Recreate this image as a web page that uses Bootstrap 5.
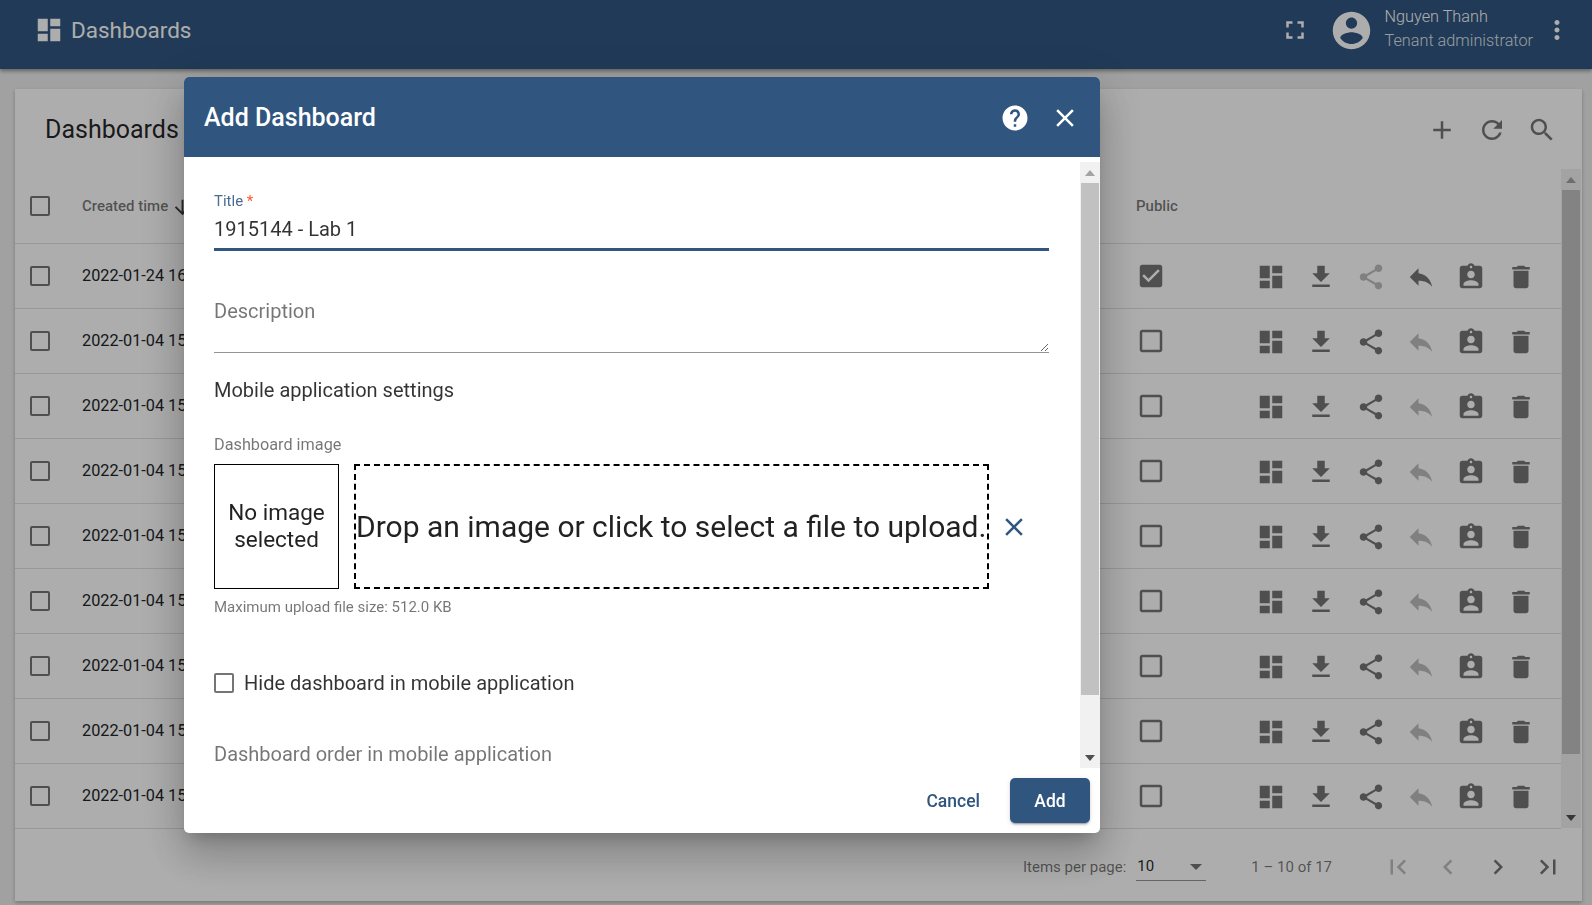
<!DOCTYPE html>
<html lang="en">
<head>
    <meta charset="UTF-8">
    <meta name="viewport" content="width=device-width, initial-scale=1.0">
    <title>Dashboards</title>
    <link href="https://cdn.jsdelivr.net/npm/bootstrap@5.3.0/dist/css/bootstrap.min.css" rel="stylesheet">
    <style>
        html, body { height: 100%; overflow: hidden; }
        body { font-family: Roboto, "Liberation Sans", sans-serif; background: #eee; color: rgba(0,0,0,.87); }
        svg.ic { width: 30px; height: 30px; fill: currentColor; flex: none; display: block; }
        svg.ic-avatar { width: 45px; height: 45px; margin-left: 19px; }
        svg.ic-sort { width: 23px; height: 23px; margin: 3px 0 0 3px; color: rgba(0,0,0,.75); }
        .tb-top { height: 69px; background: #305680; color: #fff; padding: 0 20px 9px 34px; box-shadow: 0 2px 4px rgba(0,0,0,.4); position: relative; }
        .tb-title { font-size: 22.5px; font-weight: 400; margin-left: 7px; line-height: 30px; }
        .user-box { margin: 0 9px 3px 11px; }
        .user-name { font-size: 16.25px; font-weight: 300; line-height: 24px; }
        .user-role { font-size: 16.25px; font-weight: 300; line-height: 24px; opacity: .85; }
        .page-main { padding: 20px 10px 0 15px; }
        .list-card { height: 812px; border-radius: 0; border: 0; box-shadow: 0 2px 4px rgba(0,0,0,.25); }
        .card-tools { height: 80px; padding: 2px 15px 0 30px; }
        .card-heading { font-size: 25px; font-weight: 400; line-height: 32px; margin: 0; }
        .tool-btn { width: 50px; height: 50px; color: rgba(0,0,0,.54); }
        .tool-btn.off { color: rgba(0,0,0,.26); }
        .list-wrap { height: 661px; overflow: hidden; }
        .list-wrap .table-box { flex: 1; min-width: 0; }
        .dash-table { table-layout: fixed; margin: 0; font-size: 16.25px; --bs-table-bg: transparent; --bs-table-border-color: rgba(0,0,0,.12); }
        .dash-table th, .dash-table td { padding: 0; vertical-align: middle; height: 65px; }
        .dash-table thead th { height: 74px; font-size: 15px; font-weight: 500; color: rgba(0,0,0,.54); }
        .dash-table td.time-cell { padding-top: 1px; }
        .dash-table td.act-cell { padding-top: 2px; }
        .check-cell { padding-left: 15px !important; }
        .box-check { display: block; width: 20px; height: 20px; border: 2px solid rgba(0,0,0,.54); border-radius: 2px; }
        .fake-sb { width: 20px; background: #f1f1f1; }
        .sb-up, .sb-down { height: 21px; }
        .sb-up::before, .sb-down::before { content: ""; border-left: 5px solid transparent; border-right: 5px solid transparent; }
        .sb-up::before { border-bottom: 6px solid #a3a3a3; }
        .sb-down::before { border-top: 6px solid #505050; }
        .sb-thumb { background: #c1c1c1; margin: 0 1px; }
        .sb-rest { flex: 1; }
        .list-sb { height: 659px; margin-right: 1px; }
        .list-sb .sb-thumb { height: 564px; }
        .pager { height: 71px; padding: 3px 9px 0 0; font-size: 15px; font-weight: 400; color: rgba(0,0,0,.54); }
        .pager-select { width: 70px; height: 27px; margin: 0 45px 0 10px; color: rgba(0,0,0,.87); border-bottom: 1px solid rgba(0,0,0,.42); padding: 0 0 0 1px; }
        .pager-select::after { content: ""; border-left: 6px solid transparent; border-right: 6px solid transparent; border-top: 6px solid rgba(0,0,0,.54); margin-right: 4px; }
        .pager-range { margin-right: 41px; }
        .modal-backdrop.show { opacity: .32; }
        .add-dialog { max-width: 916px; width: 916px; margin: 77px 0 0 184px; }
        .add-content { border: 0; border-radius: 5px; overflow: hidden; height: 756px; box-shadow: 0 11px 15px -7px rgba(0,0,0,.2), 0 24px 38px 3px rgba(0,0,0,.14), 0 9px 46px 8px rgba(0,0,0,.12); }
        .add-head { height: 80px; flex: none; background: #305680; color: #fff; padding: 2px 10px 0 20px; border: 0; border-radius: 0; }
        .add-head h2 { font-size: 25px; font-weight: 500; margin: 0; line-height: 30px; }
        .head-btn { width: 50px; height: 50px; }
        .add-body { padding: 0; height: 611px; flex: none; overflow: hidden; }
        .form-side { flex: 1; min-width: 0; padding: 34px 31px 0 30px; overflow: hidden; height: 611px; color: rgba(0,0,0,.8); }
        .modal-sb { margin-top: 5px; height: 606px; }
        .modal-sb .sb-thumb { height: 512px; }
        .field-label { font-size: 15px; line-height: 21px; color: #4a6d94; }
        .field-label span { color: #ff5722; }
        .field-input { font-size: 20px; line-height: 24px; height: 39px; padding: 0 0 2px; border: 0; border-bottom: 3px solid #305680; border-radius: 0; color: rgba(0,0,0,.8); box-shadow: none; }
        .field-area { font-size: 20px; line-height: 24px; height: 54px; margin-top: 47.5px; padding: 0; border: 0; border-bottom: 1px solid #949494; border-radius: 0; }
        .field-area::placeholder, .order-text { color: rgba(0,0,0,.54); }
        .mobile-head { font-size: 20px; line-height: 24px; margin-top: 25px; }
        .img-label { font-size: 16.25px; line-height: 18px; margin-top: 34px; color: rgba(0,0,0,.54); }
        .img-row { margin-top: 10px; height: 125px; color: rgba(0,0,0,.87); }
        .no-image { width: 125px; border: 1px solid #000; font-size: 22.5px; line-height: 27px; text-align: center; margin-right: 15px; }
        .drop-zone { width: 635px; border: 2px dashed #000; font-size: 30px; white-space: nowrap; overflow: hidden; }
        .drop-clear { color: #305680; margin-left: 10px; padding-top: 2px; }
        .upload-hint { font-size: 15px; line-height: 18px; margin-top: 9px; color: rgba(0,0,0,.54); }
        .hide-check { margin-top: 55px; font-size: 20px; line-height: 24px; min-height: 0; padding: 0; margin-bottom: 0; }
        .hide-check .form-check-input { width: 20px; height: 20px; margin: 0 10px 0 0; float: none; flex: none; border: 2px solid rgba(0,0,0,.54); border-radius: 2px; }
        .order-text { margin-top: 47px; font-size: 20px; line-height: 24px; }
        .add-foot { height: 65px; flex: none; padding: 0 10px 0 0; border: 0; margin-top: 0; }
        .btn-cancel { font-size: 17.5px; font-weight: 500; color: #305680; padding: 2px 16px 0; height: 45px; border: 0; }
        .btn-add { width: 80px; height: 45px; padding: 2px 0 0; margin: 0 0 0 10px; font-size: 17.5px; font-weight: 500; background: #305680; color: #fff; border: 0; border-radius: 5px; box-shadow: 0 3px 1px -2px rgba(0,0,0,.2), 0 2px 2px rgba(0,0,0,.14), 0 1px 5px rgba(0,0,0,.12); }
    </style>
</head>
<body>
    <svg width="0" height="0" class="position-absolute">
        <symbol id="i-dash" viewBox="0 0 24 24"><path d="M3 13h8V3H3v10zm0 8h8v-6H3v6zm10 0h8V11h-8v10zm0-18v6h8V3h-8z"/></symbol>
        <symbol id="i-down" viewBox="0 0 24 24"><path d="M19 9h-4V3H9v6H5l7 7 7-7zM5 18v2h14v-2H5z"/></symbol>
        <symbol id="i-share" viewBox="0 0 24 24"><path d="M18 16.08c-.76 0-1.44.3-1.96.77L8.91 12.7c.05-.23.09-.46.09-.7s-.04-.47-.09-.7l7.05-4.11c.54.5 1.25.81 2.04.81 1.66 0 3-1.34 3-3s-1.34-3-3-3-3 1.34-3 3c0 .24.04.47.09.7L8.04 9.81C7.5 9.31 6.79 9 6 9c-1.66 0-3 1.34-3 3s1.34 3 3 3c.79 0 1.5-.31 2.04-.81l7.12 4.16c-.05.21-.08.43-.08.65 0 1.61 1.31 2.92 2.92 2.92 1.61 0 2.92-1.31 2.92-2.92s-1.31-2.92-2.92-2.92z"/></symbol>
        <symbol id="i-reply" viewBox="0 0 24 24"><path d="M10 9V5l-7 7 7 7v-4.1c5 0 8.5 1.6 11 5.1-1-5-4-10-11-11z"/></symbol>
        <symbol id="i-assign" viewBox="0 0 24 24"><path d="M19 3h-4.18C14.4 1.84 13.3 1 12 1c-1.3 0-2.4.84-2.82 2H5c-1.1 0-2 .9-2 2v14c0 1.1.9 2 2 2h14c1.1 0 2-.9 2-2V5c0-1.1-.9-2-2-2zm-7 0c.55 0 1 .45 1 1s-.45 1-1 1-1-.45-1-1 .45-1 1-1zm0 4c1.66 0 3 1.34 3 3s-1.34 3-3 3-3-1.34-3-3 1.34-3 3-3zm6 12H6v-1.4c0-2 4-3.1 6-3.1s6 1.1 6 3.1V19z"/></symbol>
        <symbol id="i-del" viewBox="0 0 24 24"><path d="M6 19c0 1.1.9 2 2 2h8c1.1 0 2-.9 2-2V7H6v12zM19 4h-3.5l-1-1h-5l-1 1H5v2h14V4z"/></symbol>
        <symbol id="i-full" viewBox="0 0 24 24"><path d="M7 14H5v5h5v-2H7v-3zm-2-4h2V7h3V5H5v5zm12 7h-3v2h5v-5h-2v3zM14 5v2h3v3h2V5h-5z"/></symbol>
        <symbol id="i-user" viewBox="0 0 24 24"><path d="M12 2C6.48 2 2 6.48 2 12s4.48 10 10 10 10-4.48 10-10S17.52 2 12 2zm0 3c1.66 0 3 1.34 3 3s-1.34 3-3 3-3-1.34-3-3 1.34-3 3-3zm0 14.2c-2.5 0-4.71-1.28-6-3.22.03-1.99 4-3.08 6-3.08 1.99 0 5.97 1.09 6 3.08-1.29 1.94-3.5 3.22-6 3.22z"/></symbol>
        <symbol id="i-more" viewBox="0 0 24 24"><path d="M12 8c1.1 0 2-.9 2-2s-.9-2-2-2-2 .9-2 2 .9 2 2 2zm0 2c-1.1 0-2 .9-2 2s.9 2 2 2 2-.9 2-2-.9-2-2-2zm0 6c-1.1 0-2 .9-2 2s.9 2 2 2 2-.9 2-2-.9-2-2-2z"/></symbol>
        <symbol id="i-add" viewBox="0 0 24 24"><path d="M19 13h-6v6h-2v-6H5v-2h6V5h2v6h6v2z"/></symbol>
        <symbol id="i-refresh" viewBox="0 0 24 24"><path d="M17.65 6.35C16.2 4.9 14.21 4 12 4c-4.42 0-7.99 3.58-7.99 8s3.57 8 7.99 8c3.73 0 6.84-2.55 7.73-6h-2.08c-.82 2.33-3.04 4-5.65 4-3.31 0-6-2.69-6-6s2.69-6 6-6c1.66 0 3.14.69 4.22 1.78L13 11h7V4l-2.35 2.35z"/></symbol>
        <symbol id="i-search" viewBox="0 0 24 24"><path d="M15.5 14h-.79l-.28-.27C15.41 12.59 16 11.11 16 9.5 16 5.91 13.09 3 9.5 3S3 5.91 3 9.5 5.91 16 9.5 16c1.61 0 3.09-.59 4.23-1.57l.27.28v.79l5 4.99L20.49 19l-4.99-5zm-6 0C7.01 14 5 11.99 5 9.5S7.01 5 9.5 5 14 7.01 14 9.5 11.99 14 9.5 14z"/></symbol>
        <symbol id="i-close" viewBox="0 0 24 24"><path d="M19 6.41L17.59 5 12 10.59 6.41 5 5 6.41 10.59 12 5 17.59 6.41 19 12 13.41 17.59 19 19 17.59 13.41 12z"/></symbol>
        <symbol id="i-help" viewBox="0 0 24 24"><path d="M12 2C6.48 2 2 6.48 2 12s4.48 10 10 10 10-4.48 10-10S17.52 2 12 2zm1 17h-2v-2h2v2zm2.07-7.75l-.9.92C13.45 12.9 13 13.5 13 15h-2v-.5c0-1.1.45-2.1 1.17-2.83l1.24-1.26c.37-.36.59-.86.59-1.41 0-1.1-.9-2-2-2s-2 .9-2 2H8c0-2.21 1.79-4 4-4s4 1.79 4 4c0 .88-.36 1.68-.93 2.25z"/></symbol>
        <symbol id="i-first" viewBox="0 0 24 24"><path d="M18.41 16.59L13.82 12l4.59-4.59L17 6l-6 6 6 6zM6 6h2v12H6z"/></symbol>
        <symbol id="i-prev" viewBox="0 0 24 24"><path d="M15.41 7.41L14 6l-6 6 6 6 1.41-1.41L10.83 12z"/></symbol>
        <symbol id="i-next" viewBox="0 0 24 24"><path d="M10 6L8.59 7.41 13.17 12l-4.58 4.59L10 18l6-6z"/></symbol>
        <symbol id="i-last" viewBox="0 0 24 24"><path d="M5.59 7.41L10.18 12l-4.59 4.59L7 18l6-6-6-6zM16 6h2v12h-2z"/></symbol>
        <symbol id="i-blank" viewBox="0 0 24 24"><path d="M19 5v14H5V5h14m0-2H5c-1.1 0-2 .9-2 2v14c0 1.1.9 2 2 2h14c1.1 0 2-.9 2-2V5c0-1.1-.9-2-2-2z"/></symbol>
        <symbol id="i-checked" viewBox="0 0 24 24"><path d="M19 3H5c-1.11 0-2 .9-2 2v14c0 1.1.89 2 2 2h14c1.11 0 2-.9 2-2V5c0-1.1-.89-2-2-2zm-9 14l-5-5 1.41-1.41L10 14.17l7.59-7.59L19 8l-9 9z"/></symbol>
        <symbol id="i-sort" viewBox="0 0 24 24"><path d="M20 12l-1.41-1.41L13 16.17V4h-2v12.17l-5.58-5.6L4 12l8 8 8-8z"/></symbol>
    </svg>

    <header class="tb-top d-flex align-items-center">
        <svg class="ic"><use href="#i-dash"/></svg>
        <span class="tb-title">Dashboards</span>
        <svg class="ic ms-auto"><use href="#i-full"/></svg>
        <svg class="ic ic-avatar"><use href="#i-user"/></svg>
        <div class="user-box">
            <div class="user-name">Nguyen Thanh</div>
            <div class="user-role">Tenant administrator</div>
        </div>
        <svg class="ic"><use href="#i-more"/></svg>
    </header>

    <main class="page-main">
        <div class="card list-card">
            <div class="card-tools d-flex align-items-center">
                <h1 class="card-heading">Dashboards</h1>
                <div class="tool-btn d-flex align-items-center justify-content-center ms-auto"><svg class="ic"><use href="#i-add"/></svg></div>
                <div class="tool-btn d-flex align-items-center justify-content-center"><svg class="ic"><use href="#i-refresh"/></svg></div>
                <div class="tool-btn d-flex align-items-center justify-content-center"><svg class="ic"><use href="#i-search"/></svg></div>
            </div>
            <div class="list-wrap d-flex">
                <div class="table-box">
                    <table class="table dash-table">
                        <colgroup>
                            <col style="width:67px"><col style="width:300px"><col><col style="width:110px"><col style="width:315px">
                        </colgroup>
                        <thead>
                            <tr>
                                <th class="check-cell"><span class="box-check"></span></th>
                                <th><div class="d-flex align-items-center">Created time<svg class="ic ic-sort"><use href="#i-sort"/></svg></div></th>
                                <th>Title</th>
                                <th>Public</th>
                                <th></th>
                            </tr>
                        </thead>
                        <tbody id="dashRows"></tbody>
                    </table>
                </div>
                <div class="fake-sb list-sb d-flex flex-column">
                    <div class="sb-up d-flex align-items-center justify-content-center"></div>
                    <div class="sb-thumb"></div>
                    <div class="sb-rest"></div>
                    <div class="sb-down d-flex align-items-center justify-content-center"></div>
                </div>
            </div>
            <div class="pager d-flex align-items-center justify-content-end">
                <span>Items per page:</span>
                <div class="pager-select d-flex align-items-center justify-content-between"><span>10</span></div>
                <span class="pager-range">1 – 10 of 17</span>
                <div class="tool-btn off d-flex align-items-center justify-content-center"><svg class="ic"><use href="#i-first"/></svg></div>
                <div class="tool-btn off d-flex align-items-center justify-content-center"><svg class="ic"><use href="#i-prev"/></svg></div>
                <div class="tool-btn d-flex align-items-center justify-content-center"><svg class="ic"><use href="#i-next"/></svg></div>
                <div class="tool-btn d-flex align-items-center justify-content-center"><svg class="ic"><use href="#i-last"/></svg></div>
            </div>
        </div>
    </main>

    <div class="modal-backdrop show"></div>
    <div class="modal d-block">
        <div class="modal-dialog add-dialog">
            <div class="modal-content add-content">
                <div class="modal-header add-head d-flex align-items-center">
                    <h2>Add Dashboard</h2>
                    <div class="head-btn d-flex align-items-center justify-content-center ms-auto"><svg class="ic"><use href="#i-help"/></svg></div>
                    <div class="head-btn d-flex align-items-center justify-content-center"><svg class="ic"><use href="#i-close"/></svg></div>
                </div>
                <div class="modal-body add-body d-flex">
                    <div class="form-side">
                        <div class="field-label">Title <span>*</span></div>
                        <input class="form-control field-input" type="text" value="1915144 - Lab 1">
                        <textarea class="form-control field-area" placeholder="Description"></textarea>
                        <div class="mobile-head">Mobile application settings</div>
                        <div class="img-label">Dashboard image</div>
                        <div class="img-row d-flex">
                            <div class="no-image d-flex align-items-center justify-content-center">No image selected</div>
                            <div class="drop-zone d-flex align-items-center">Drop an image or click to select a file to upload.</div>
                            <div class="drop-clear d-flex align-items-center"><svg class="ic"><use href="#i-close"/></svg></div>
                        </div>
                        <div class="upload-hint">Maximum upload file size: 512.0 KB</div>
                        <div class="form-check hide-check d-flex align-items-center">
                            <input class="form-check-input" type="checkbox" id="hideMobile">
                            <label for="hideMobile">Hide dashboard in mobile application</label>
                        </div>
                        <div class="order-text">Dashboard order in mobile application</div>
                    </div>
                    <div class="fake-sb modal-sb d-flex flex-column">
                        <div class="sb-up d-flex align-items-center justify-content-center"></div>
                        <div class="sb-thumb"></div>
                        <div class="sb-rest"></div>
                        <div class="sb-down d-flex align-items-center justify-content-center"></div>
                    </div>
                </div>
                <div class="modal-footer add-foot d-flex align-items-center justify-content-end">
                    <button type="button" class="btn btn-cancel">Cancel</button>
                    <button type="button" class="btn btn-add">Add</button>
                </div>
            </div>
        </div>
    </div>

    <script src="https://cdn.jsdelivr.net/npm/bootstrap@5.3.0/dist/js/bootstrap.bundle.min.js"></script>
    <script>
        const rows = [
            { time: '2022-01-24 16:20:11', pub: true },
            { time: '2022-01-04 15:42:37', pub: false },
            { time: '2022-01-04 15:42:31', pub: false },
            { time: '2022-01-04 15:42:25', pub: false },
            { time: '2022-01-04 15:42:19', pub: false },
            { time: '2022-01-04 15:42:13', pub: false },
            { time: '2022-01-04 15:42:07', pub: false },
            { time: '2022-01-04 15:42:01', pub: false },
            { time: '2022-01-04 15:41:55', pub: false }
        ];
        const tbody = document.getElementById('dashRows');

        function action(icon, off) {
            return `<div class="tool-btn ${off ? 'off' : ''} d-flex align-items-center justify-content-center"><svg class="ic"><use href="#${icon}"/></svg></div>`;
        }

        rows.forEach(r => {
            tbody.innerHTML += `
                <tr>
                    <td class="check-cell"><span class="box-check"></span></td>
                    <td class="time-cell">${r.time}</td>
                    <td></td>
                    <td><div class="tool-btn d-flex align-items-center" style="width:auto"><svg class="ic"><use href="#${r.pub ? 'i-checked' : 'i-blank'}"/></svg></div></td>
                    <td class="act-cell">
                        <div class="d-flex">
                            ${action('i-dash')}${action('i-down')}${action('i-share', r.pub)}${action('i-reply', !r.pub)}${action('i-assign')}${action('i-del')}
                        </div>
                    </td>
                </tr>`;
        });
    </script>
</body>
</html>
